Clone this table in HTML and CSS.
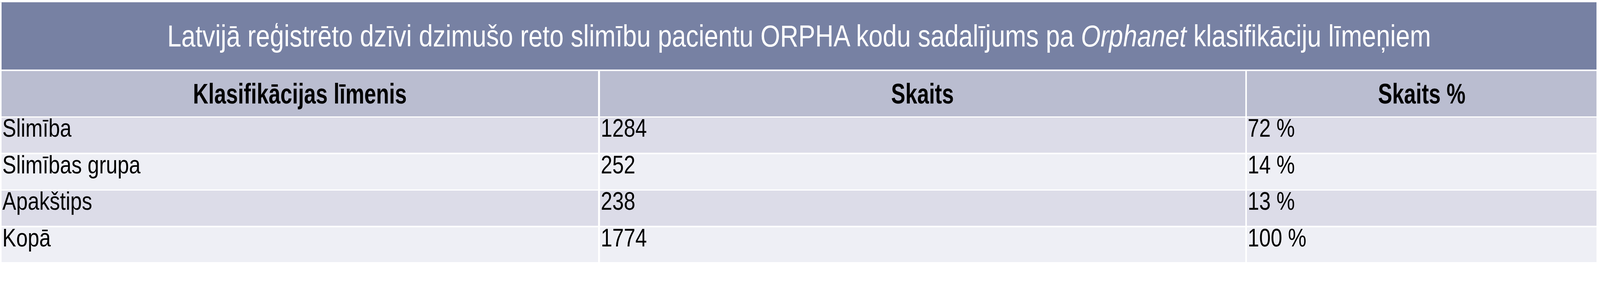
FILE: index.html
```html
<!DOCTYPE html>
<html lang="lv">
<head>
<meta charset="utf-8">
<title>ORPHA kodu sadalījums</title>
<link rel="stylesheet" href="styles.css">
</head>
<body>
<div class="page">
  <div class="table">
    <div class="title"><span class="sq sq-title">Latvijā reģistrēto dzīvi dzimušo reto slimību pacientu ORPHA kodu sadalījums pa <em>Orphanet</em> klasifikāciju līmeņiem</span></div>
    <div class="grid">
      <div class="cell head"><span class="sq sq-head">Klasifikācijas līmenis</span></div>
      <div class="cell head"><span class="sq sq-head">Skaits</span></div>
      <div class="cell head"><span class="sq sq-head">Skaits %</span></div>

      <div class="cell odd"><span class="sq">Slimība</span></div>
      <div class="cell odd"><span class="sq">1284</span></div>
      <div class="cell odd"><span class="sq">72 %</span></div>

      <div class="cell even"><span class="sq">Slimības grupa</span></div>
      <div class="cell even"><span class="sq">252</span></div>
      <div class="cell even"><span class="sq">14 %</span></div>

      <div class="cell odd"><span class="sq">Apakštips</span></div>
      <div class="cell odd"><span class="sq">238</span></div>
      <div class="cell odd"><span class="sq">13 %</span></div>

      <div class="cell even"><span class="sq">Kopā</span></div>
      <div class="cell even"><span class="sq">1774</span></div>
      <div class="cell even"><span class="sq">100 %</span></div>
    </div>
  </div>
</div>
</body>
</html>
```
FILE: styles.css
```css
html, body {
  margin: 0;
  padding: 0;
  background: #ffffff;
}

body {
  font-family: "Liberation Sans Narrow", "Arial Narrow", "Liberation Sans", Arial, sans-serif;
  color: #000000;
}

.page {
  padding: 4.8px 8.7px 0 0;
}

.table {
  border-top: 1px solid #e2e3ea;
  padding-left: 3.85px;
}

.title {
  height: 172.4px;
  background: #7781a3;
  color: #ffffff;
  display: flex;
  align-items: center;
  justify-content: center;
  font-size: 78px;
  line-height: 1;
  white-space: nowrap;
  margin-bottom: 3.85px;
  overflow: hidden;
}

.title em {
  font-style: italic;
}

.grid {
  display: grid;
  grid-template-columns: 1585fr 1715fr 929fr;
  grid-template-rows: 115.6px repeat(4, 89.6px);
  column-gap: 4.8px;
  row-gap: 3.85px;
}

.cell {
  min-width: 0;
  font-size: 65.5px;
  line-height: 0.82;
  padding-left: 2px;
  white-space: nowrap;
}

.head {
  background: #babdd0;
  font-weight: bold;
  font-size: 72.3px;
  line-height: 1;
  display: flex;
  align-items: center;
  justify-content: center;
  padding-left: 0;
}

.odd {
  background: #dcdce8;
}

.even {
  background: #eeeff5;
}

.sq {
  display: inline-block;
  transform: scaleX(0.81);
  transform-origin: left center;
}

.sq-title {
  transform: scaleX(0.83);
  transform-origin: center center;
}

.sq-head {
  transform: scaleX(0.7525);
  transform-origin: center center;
}
```
